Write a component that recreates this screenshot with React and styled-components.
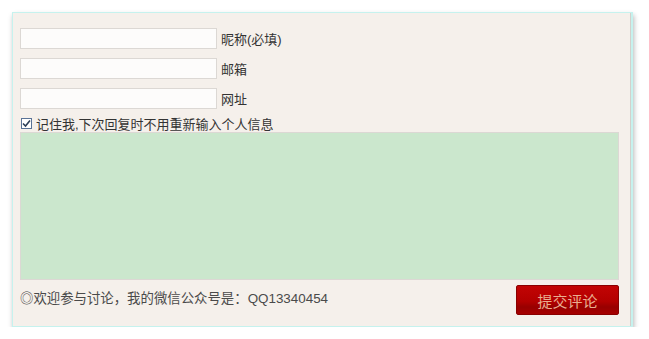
import styled, { createGlobalStyle } from 'styled-components'

const GlobalStyle = createGlobalStyle`
    body {
        margin: 0;
        background: #ffffff;
        font-family: "Liberation Sans", "Noto Sans CJK SC", sans-serif;
    }
`

const fields = [
    { name: 'author', label: '昵称(必填)' },
    { name: 'email', label: '邮箱' },
    { name: 'url', label: '网址' },
]

const App = () => {
    return (
        <>
            <GlobalStyle />
            <Panel>
                {fields.map((field) => (
                    <FieldRow key={field.name}>
                        <TextInput type='text' name={field.name} />
                        <Label>{field.label}</Label>
                    </FieldRow>
                ))}
                <Remember>
                    <CheckBox>
                        <svg width='9' height='9' viewBox='0 0 9 9'>
                            <path d='M1 4.5 L3.5 7 L8 1.5' fill='none' stroke='#2c3e57' strokeWidth='1.6' />
                        </svg>
                    </CheckBox>
                    记住我,下次回复时不用重新输入个人信息
                </Remember>
                <Comment />
                <Footer>
                    <Notice>◎欢迎参与讨论，我的微信公众号是：QQ13340454</Notice>
                    <Submit>提交评论</Submit>
                </Footer>
            </Panel>
        </>
    )
}

const Panel = styled.div`
    margin: 12px 0 0 12px;
    width: 621px;
    height: 315px;
    box-sizing: border-box;
    background: #f5f0eb;
    border: 1px solid #c6f2ee;
    border-right: 2px solid #c6f2ee;
    box-shadow: 1px 3px 5px rgba(0, 0, 0, 0.28), inset -1px 0 0 #d4d0cc;
    padding: 15px 16px 0 7px;
    display: flex;
    flex-direction: column;
`
const FieldRow = styled.div`
    display: flex;
    align-items: center;
    height: 21px;
    margin-bottom: 9px;
`
const TextInput = styled.input`
    width: 197px;
    height: 21px;
    box-sizing: border-box;
    margin: 0;
    border: 1px solid #dcd8d4;
    background: #fdfcfb;
    outline: none;
`
const Label = styled.span`
    margin-left: 4px;
    font-size: 13px;
    color: #333;
`
const Remember = styled.label`
    display: flex;
    align-items: center;
    height: 15px;
    margin-top: -2px;
    font-size: 13px;
    color: #333;
`
const CheckBox = styled.span`
    width: 11px;
    height: 11px;
    box-sizing: border-box;
    margin: 0 4px 0 1px;
    border: 1px solid #5a7396;
    background: #ffffff;
    display: flex;
    align-items: center;
    justify-content: center;
`
const Comment = styled.textarea`
    width: 599px;
    height: 148px;
    box-sizing: border-box;
    margin: 1px 0 0;
    border: 1px solid #dcd8d4;
    background: #cbe7cd;
    resize: none;
    outline: none;
`
const Footer = styled.div`
    display: flex;
    justify-content: space-between;
    align-items: flex-start;
    width: 599px;
    margin-top: 4px;
`
const Notice = styled.div`
    font-size: 13.4px;
    color: #4a4a4a;
    margin-top: 3px;
`
const Submit = styled.button`
    width: 103px;
    height: 30px;
    margin-top: 1px;
    border: 1px solid #8a0000;
    border-radius: 2px;
    background: linear-gradient(180deg, #c20404 0%, #b30000 55%, #980000 75%, #a60000 100%);
    color: #e9ae90;
    font-size: 15px;
    font-family: "Noto Sans CJK SC", sans-serif;
    cursor: pointer;
`

export default App
